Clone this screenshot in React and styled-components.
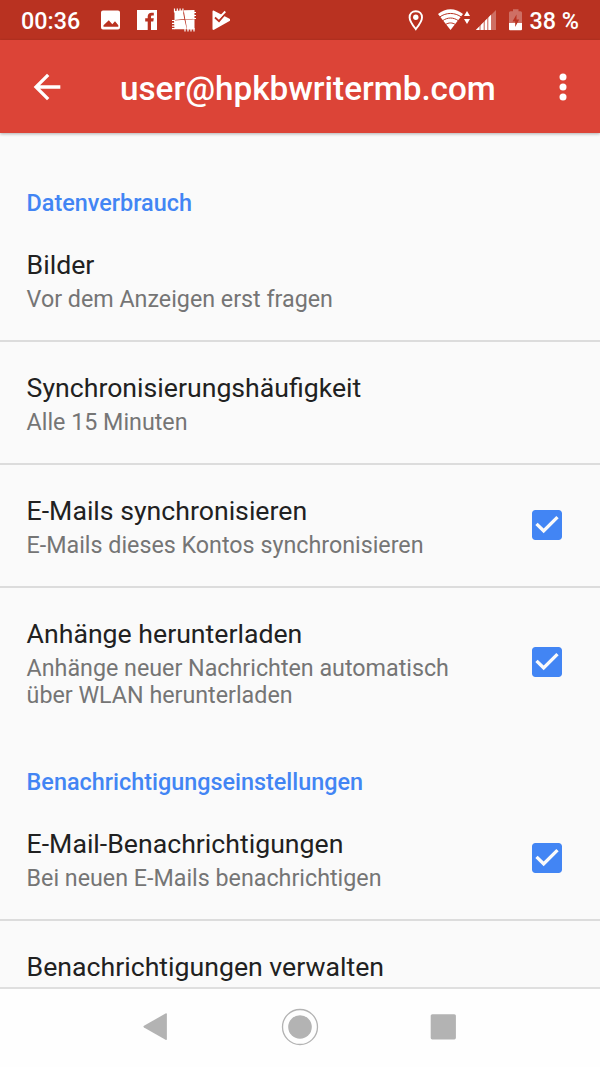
import React, {useState} from 'react'
import styled, {createGlobalStyle} from 'styled-components'

const GlobalStyle = createGlobalStyle`
  * {
    box-sizing: border-box;
  }
  body {
    margin: 0;
    background: #fafafa;
    font-family: Roboto, "Noto Sans", sans-serif;
  }
  svg {
    display: block;
    flex-shrink: 0;
  }
`

const Screen = styled.div`
  width: 600px;
  height: 1067px;
  display: flex;
  flex-direction: column;
  overflow: hidden;
  background: #fafafa;
`

const StatusBar = styled.div`
  height: 40px;
  flex-shrink: 0;
  display: flex;
  align-items: center;
  padding: 0 21px;
  background: #b93221;
  color: #fff;
  font-size: 23.33px;
  font-weight: 500;
`

const Clock = styled.span`
  width: 79px;
  padding-top: 2px;
  line-height: 40px;
`

const StatusIcons = styled.div`
  display: flex;
  align-items: center;
`

const SystemIcons = styled(StatusIcons)`
  margin-left: auto;
`

const Battery = styled.span`
  padding: 2px 0 0 4px;
  line-height: 40px;
  white-space: nowrap;
`

const AppBar = styled.header`
  height: 93px;
  flex-shrink: 0;
  display: flex;
  align-items: center;
  padding: 0 17px 0 26.5px;
  background: #dc4437;
  color: #fff;
  box-shadow: 0 1px 3px rgba(0, 0, 0, 0.3);
  z-index: 1;
`

const IconButton = styled.button`
  width: 40px;
  height: 40px;
  padding: 0;
  border: none;
  background: none;
  color: inherit;
`

const Title = styled.h1`
  flex: 1;
  margin: 0 0 0 53.5px;
  padding-top: 3px;
  font-size: 33.25px;
  font-weight: 500;
  line-height: 39px;
  white-space: nowrap;
`

const Settings = styled.main`
  flex: 1;
  min-height: 0;
  overflow: hidden;
  padding-top: 26.4px;
`

const SectionTitle = styled.h2`
  height: 60px;
  margin: 0;
  padding: 31px 26.6px 0;
  color: #4285f4;
  font-size: 23.4px;
  font-weight: 500;
  line-height: 27.33px;
`

const Row = styled.div`
  display: flex;
  align-items: center;
  justify-content: space-between;
  padding: 31px 33.5px ${({$last}) => $last ? '27px' : '26.8px'} 26.6px;
  border-bottom: 2px solid ${({$last}) => $last ? 'transparent' : '#dcdcdc'};

  ${IconButton} {
    margin-bottom: 4.6px;
  }
`

const RowText = styled.div`
  width: 450px;
`

const RowTitle = styled.div`
  color: #212121;
  font-size: 26.67px;
  line-height: 31.25px;
`

const Summary = styled.div`
  margin-top: 4.8px;
  color: #757575;
  font-size: 23.27px;
  line-height: 27px;
`

const NavBar = styled.nav`
  height: 80px;
  flex-shrink: 0;
  display: flex;
  align-items: center;
  justify-content: center;
  gap: 104px;
  padding-bottom: 2px;
  border-top: 2px solid #dfdfdf;
  background: #fefefe;
`

const sections = [
  {
    title: 'Datenverbrauch',
    items: [
      {id: 'images', title: 'Bilder', summary: 'Vor dem Anzeigen erst fragen'},
      {id: 'frequency', title: 'Synchronisierungshäufigkeit', summary: 'Alle 15 Minuten'},
      {id: 'sync', title: 'E-Mails synchronisieren', summary: 'E-Mails dieses Kontos synchronisieren', check: true},
      {id: 'attachments', title: 'Anhänge herunterladen', summary: 'Anhänge neuer Nachrichten automatisch über WLAN herunterladen', check: true},
    ],
  },
  {
    title: 'Benachrichtigungseinstellungen',
    items: [
      {id: 'notify', title: 'E-Mail-Benachrichtigungen', summary: 'Bei neuen E-Mails benachrichtigen', check: true},
      {id: 'manage', title: 'Benachrichtigungen verwalten'},
    ],
  },
]

function NotificationIcons() {
  return (
    <svg width="132" height="40" viewBox="100 0 132 40" fill="#fff">
      <path fillRule="evenodd" d="M103 10.500h15a2 2 0 0 1 2 2v15a2 2 0 0 1-2 2h-15a2 2 0 0 1-2-2v-15a2 2 0 0 1 2-2zM103.500 26.800h14.800v-1.500l-3.300-4-2.700 3-3.500-4-5.300 5z" />
      <path d="M137 10h20v20h-6v-8.500h2.300l.5-3.200H151v-1.500c0-.9.400-1.300 1.400-1.300h1.400v-2.800h-2.200c-2.400 0-3.900 1.400-3.900 3.800v1.800h-2.500v3.200h2.500V30H137z" />
      <path d="M174.500 11l8.200-.8 1.600 8.900-9.800.9zM183.700 10.200l10.800-.2v8.800l-9.200.8zM174 20.600l10.500-.9 2.300 9.600-12.300-.1zM185.500 20.100l9-.8v10.200l-7.400.1z" />
      <path d="M174.500 8.500v4M177.300 8.500v4M180.100 8.500v4M182.900 8.500v4M193 12.500h3M193 15.500h3M193 18.500h3M172 20.500h3M172 23.300h3M172 26.100h3M172 28.700h3M185 28v3.500M188 28v3.500M191 28v3.500M194 28v3.500" stroke="#fff" strokeWidth="1.200" />
      <path d="M212.500 11.500c0-1 .8-1.300 1.500-.8l16 8.300v1.800L214 29.800c-.7.300-1.500 0-1.500-.8z" />
      <path d="M215 17.500l4 3.600 7.500-8.800" fill="none" stroke="#b93221" strokeWidth="1.800" />
      <path d="M219 17.800l6.300-6.300" fill="none" stroke="#fff" strokeWidth="1.800" />
    </svg>
  )
}

function RadioIcons() {
  return (
    <svg width="121" height="40" viewBox="405 0 121 40" fill="#fff">
      <path d="M415.800 11.200c-3.700 0-6.200 2.700-6.200 6.200 0 3.900 3.500 8.200 6.200 11.700 2.700-3.500 6.200-7.800 6.200-11.700 0-3.500-2.500-6.200-6.200-6.200z" fill="none" stroke="#fff" strokeWidth="1.900" />
      <circle cx="415.800" cy="17.200" r="2.700" />
      <path d="M438 14c7.500-6.300 17.500-6.300 25 0L450.500 30z" />
      <path d="M439.500 17.200c6.500-5 15.500-5 22 0M442.500 20.800c5-3.700 11-3.700 16 0M445.500 24.600c3-2.200 7-2.200 10 0" fill="none" stroke="#b93221" strokeWidth="1" />
      <path d="M464 16l3-5 3 5zM464 19h6l-3 5z" />
      <path d="M475.800 30L496 10v20z" opacity=".3" />
      <path d="M475.800 30l15.200-15.200V30z" />
      <path d="M480 23v7M484.200 19v11M487.800 16v14" stroke="#b93221" strokeWidth=".8" />
      <path d="M513 9.200h5.500v2h2q1.500 0 1.500 1.500V23h-13V12.700q0-1.500 1.500-1.500h2.500z" opacity=".3" />
      <path d="M509 23h13v6.200q0 1-1 1h-11q-1 0-1-1z" />
      <path d="M516.500 14.500l-4 7h2.700v5.500l4-7.500h-2.700z" fill="#b93221" />
    </svg>
  )
}

function BackIcon() {
  return (
    <svg width="40" height="40" viewBox="0 0 24 24" fill="currentColor">
      <path d="M20 11H7.830l5.590-5.590L12 4l-8 8 8 8 1.410-1.410L7.830 13H20v-2z" />
    </svg>
  )
}

function MoreIcon() {
  return (
    <svg width="40" height="40" viewBox="0 0 24 24" fill="currentColor">
      <circle cx="12" cy="6" r="2.100" />
      <circle cx="12" cy="12" r="2.100" />
      <circle cx="12" cy="18" r="2.100" />
    </svg>
  )
}

function CheckIcon({checked}) {
  return (
    <svg width="40" height="40" viewBox="0 0 24 24" fill={checked ? '#4285f4' : '#757575'}>
      {checked
        ? <path d="M19 3H5c-1.110 0-2 .9-2 2v14c0 1.100.89 2 2 2h14c1.110 0 2-.9 2-2V5c0-1.100-.89-2-2-2zm-9 14l-5-5 1.410-1.410L10 14.170l7.590-7.590L19 8l-9 9z" />
        : <path d="M19 5v14H5V5h14m0-2H5c-1.100 0-2 .9-2 2v14c0 1.100.9 2 2 2h14c1.100 0 2-.9 2-2V5c0-1.100-.9-2-2-2z" />}
    </svg>
  )
}

function App() {
  const [checked, setChecked] = useState({sync: true, attachments: true, notify: true})

  function toggle(id) {
    setChecked(prev => ({...prev, [id]: !prev[id]}))
  }

  return (
    <Screen>
      <GlobalStyle />
      <StatusBar>
        <Clock>00:36</Clock>
        <StatusIcons><NotificationIcons /></StatusIcons>
        <SystemIcons>
          <RadioIcons />
          <Battery>38 %</Battery>
        </SystemIcons>
      </StatusBar>
      <AppBar>
        <IconButton aria-label="Zurück"><BackIcon /></IconButton>
        <Title>user@hpkbwritermb.com</Title>
        <IconButton aria-label="Mehr"><MoreIcon /></IconButton>
      </AppBar>
      <Settings>
        {sections.map(section => (
          <section key={section.title}>
            <SectionTitle>{section.title}</SectionTitle>
            {section.items.map((item, i) => (
              <Row key={item.id} $last={i === section.items.length - 1}>
                <RowText>
                  <RowTitle>{item.title}</RowTitle>
                  {item.summary && <Summary>{item.summary}</Summary>}
                </RowText>
                {item.check && (
                  <IconButton onClick={() => toggle(item.id)}>
                    <CheckIcon checked={checked[item.id]} />
                  </IconButton>
                )}
              </Row>
            ))}
          </section>
        ))}
      </Settings>
      <NavBar>
        <svg width="40" height="40" viewBox="0 0 40 40" fill="#b3b3b3">
          <path d="M8 18.800L29.500 6.500q1.400-.6 1.400.8v24.600q0 1.400-1.400.8L8 20.400q-1.200-.8 0-1.600z" />
        </svg>
        <svg width="40" height="40" viewBox="0 0 40 40" fill="#b3b3b3">
          <circle cx="20" cy="20" r="17.500" fill="none" stroke="#b3b3b3" strokeWidth="1.300" />
          <circle cx="20" cy="20" r="11.800" />
        </svg>
        <svg width="40" height="40" viewBox="0 0 40 40" fill="#b3b3b3">
          <rect x="6.700" y="7.200" width="25.200" height="25.200" rx="1.600" />
        </svg>
      </NavBar>
    </Screen>
  )
}

export default App
